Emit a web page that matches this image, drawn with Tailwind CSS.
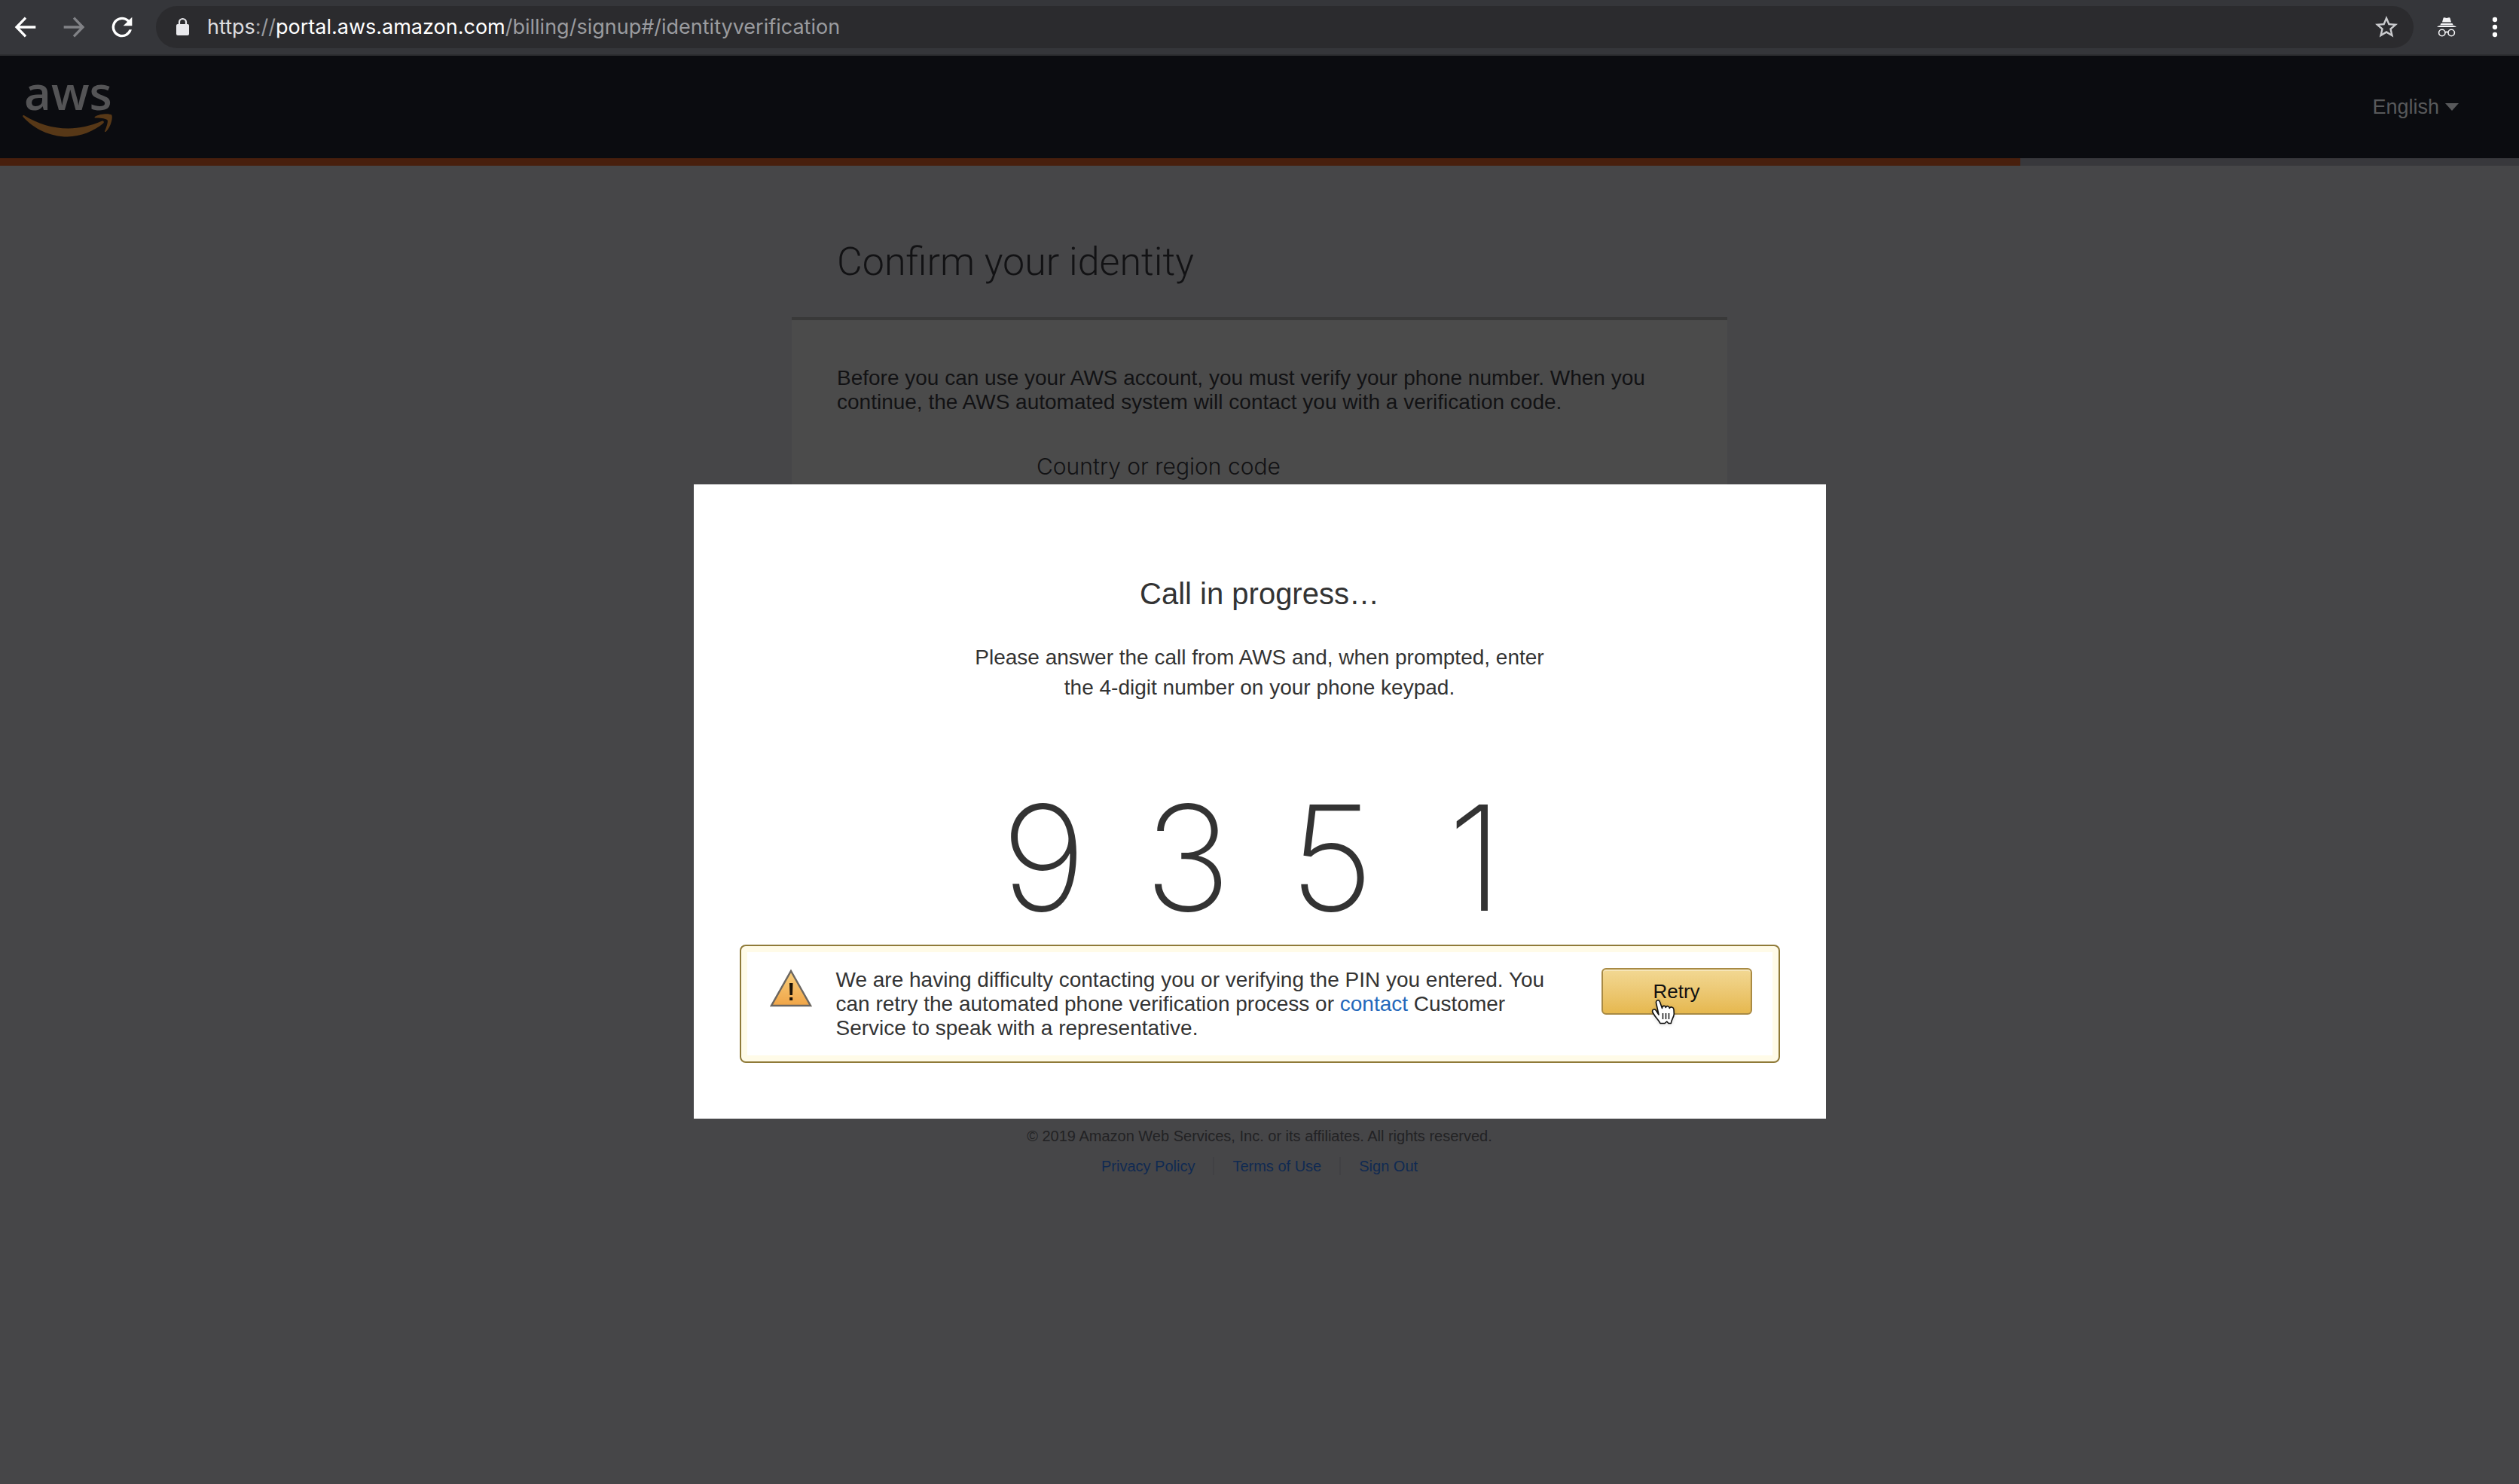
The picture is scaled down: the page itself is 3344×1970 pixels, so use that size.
<!DOCTYPE html>
<html lang="en">
<head>
<meta charset="utf-8">
<title>AWS Console - Signup</title>
<script src="https://cdn.jsdelivr.net/npm/@tailwindcss/browser@4"></script>
</head>
<body class="flex min-h-screen flex-col bg-[#464648] font-['Liberation_Sans',Arial,sans-serif] text-[28px] leading-8 text-[#121214]">

<!-- Browser toolbar -->
<div class="flex h-[74px] items-start border-b-2 border-[#2d2e31] bg-[#35363a] pt-2 pl-0.5 text-white">
  <button aria-label="Back" class="flex h-14 w-16 items-center justify-center">
    <svg class="size-10" viewBox="0 0 24 24" fill="none" stroke="currentColor" stroke-width="2"><path d="M20 12H5M12 4.600L4.800 12l7.200 7.400"/></svg>
  </button>
  <button aria-label="Forward" class="flex h-14 w-16 items-center justify-center text-[#818286]">
    <svg class="size-10" viewBox="0 0 24 24" fill="none" stroke="currentColor" stroke-width="2"><path d="M4 12h15M12 4.600l7.200 7.400-7.200 7.400"/></svg>
  </button>
  <button aria-label="Reload" class="flex h-14 w-16 items-center justify-center">
    <svg class="size-10" viewBox="0 0 24 24" fill="currentColor"><path d="M17.650 6.350A7.960 7.960 0 0 0 12 4a8 8 0 1 0 7.730 10h-2.080A6 6 0 1 1 12 6c1.660 0 3.140.690 4.220 1.780L13 11h7V4z"/></svg>
  </button>
  <div class="mr-3 ml-[13px] flex h-14 flex-1 items-center rounded-full bg-[#2b2b2e] pr-[18px] pl-[23px]">
    <svg class="h-8 w-8 shrink-0" viewBox="0 0 32 32"><rect x="4" y="12" width="17" height="15" rx="2" fill="#e8e8ec"/><path d="M8 13V9.500a4.500 4.500 0 0 1 9 0V13" fill="none" stroke="#e8e8ec" stroke-width="2.200"/></svg>
    <div class="ml-[13px] flex-1 font-['Inter',sans-serif] text-[27px] leading-9 text-[#9a9b9f]"><span class="text-[#dcdde0]">https</span>://<span class="text-white">portal.aws.amazon.com</span>/billing/signup#/identityverification</div>
    <button aria-label="Bookmark this page" class="flex size-9 items-center justify-center text-[#c9cacd]">
      <svg class="size-9" viewBox="0 0 24 24" fill="currentColor"><path d="M22 9.240l-7.190-.620L12 2 9.190 8.630 2 9.240l5.460 4.730L5.820 21 12 17.270 18.180 21l-1.630-7.030zM12 15.400l-3.760 2.270 1-4.280-3.320-2.880 4.380-.380L12 6.100l1.710 4.040 4.380.380-3.320 2.880 1 4.280z"/></svg>
    </button>
  </div>
  <button aria-label="Incognito" class="flex h-14 w-16 items-center justify-center">
    <svg class="h-7 w-7" viewBox="0 0 28 28"><path fill="#f4f4f6" d="M8 7.500L9.500 2q.300-1 1.500-.700l3 .800 3-.800q1.200-.300 1.500.700L20 7.500zM6.500 9h15l1 2h-17zM1 14q1-1.200 4.500-2.200h17q3.500 1 4.500 2.200z"/><g fill="none" stroke="#f4f4f6" stroke-width="1.600"><circle cx="7.800" cy="21.500" r="4.200"/><circle cx="20.200" cy="21.500" r="4.200"/><path d="M12 21q2-1.200 4 0"/></g></svg>
  </button>
  <button aria-label="Menu" class="flex h-14 w-16 items-center justify-center">
    <svg class="size-10" viewBox="0 0 24 24" fill="currentColor"><circle cx="12" cy="6" r="1.900"/><circle cx="12" cy="12" r="1.900"/><circle cx="12" cy="18" r="1.900"/></svg>
  </button>
</div>

<div class="relative flex flex-1 flex-col">
  <!-- Site header and sign-up progress -->
  <header class="flex h-[136px] items-center justify-between bg-[#0b0c10] pr-20 pl-7 text-[#58595b]">
    <a href="#" aria-label="AWS">
      <svg class="h-[104px] w-32 overflow-visible" viewBox="0 -8 128 104">
        <text x="4" y="48" font-family="Open Sans, sans-serif" font-weight="600" font-size="62" fill="#545456">aws</text>
        <path fill="#573817" d="M2.500 57c-1-1.300.400-2.600 2-1.500 17 10.500 37 17 58 17 15 0 30-3.500 44.500-9.700 2.300-1 4 1.400 2 3C97 76 79 83.500 61.500 83.500 38 83.500 17 73 2.500 57z"/>
        <path fill="#573817" d="M98.500 58.500c-1.200.200-1.300-.900-.300-1.700 6-4.300 20-4.500 22-2.200 1.900 2.400-.500 15.800-7.500 22.200-1 .900-2 .400-1.600-.700 1.600-3.900 5-12.700 3.400-14.800-1.600-2.100-11-3.300-16-2.800z"/>
      </svg>
    </a>
    <button class="flex items-center gap-2 text-[27px]">English
      <svg class="h-3 w-[18px]" viewBox="0 0 18 12"><path d="M0 1h18L9 11z" fill="currentColor"/></svg>
    </button>
  </header>
  <div class="h-[10px] bg-[#38383c]"><div class="h-full bg-[#481f0d]" style="width:80.2%"></div></div>

  <main class="mx-auto w-full max-w-[1242px] pt-24">
    <h1 class="mb-[41px] px-[60px] font-['Roboto',sans-serif] text-[52px] leading-[64px] font-light">Confirm your identity</h1>
    <section class="min-h-[1030px] border-t-4 border-[#393939] bg-[#4b4b4b] px-[60px] pt-[61px]">
      <p>Before you can use your AWS account, you must verify your phone number. When you continue, the AWS automated system will contact you with a verification code.</p>
      <p class="mt-[51px] pl-[265px] font-['Inter',sans-serif] text-[30px] leading-9 font-light">Country or region code</p>
    </section>
  </main>

  <footer class="mt-11 flex flex-col items-center text-xl text-[#222224]">
    <p class="leading-[26px]">© 2019 Amazon Web Services, Inc. or its affiliates. All rights reserved.</p>
    <nav class="mt-[15px] flex divide-x-2 divide-[#414144] leading-[24px] text-[#102a52]">
      <a href="#" class="px-6">Privacy Policy</a>
      <a href="#" class="px-6">Terms of Use</a>
      <a href="#" class="px-6">Sign Out</a>
    </nav>
  </footer>

  <!-- Call dialog, over the dimmed page -->
  <div role="dialog" aria-labelledby="call-title" class="absolute inset-x-0 top-[569px] mx-auto flex w-full max-w-[1503px] flex-col items-center bg-white px-[61px] pt-[121px] pb-[74px] text-[#333]">
    <h2 id="call-title" class="text-[40px] leading-[48px]">Call in progress…</h2>
    <p class="mt-[41px] max-w-[780px] text-center leading-10">Please answer the call from AWS and, when prompted, enter the 4-digit number on your phone keypad.</p>
    <div class="mt-[126px] flex font-['Inter',sans-serif] text-[194px] leading-[160px] font-extralight">
      <span class="w-[191px] text-center">9</span>
      <span class="w-[191px] text-center">3</span>
      <span class="w-[191px] text-center">5</span>
      <span class="w-[191px] text-center">1</span>
    </div>
    <div role="alert" class="mt-[35px] flex w-full items-start rounded-lg border-2 border-[#8f7a38] bg-white pt-[29px] pr-[35px] pb-7 pl-[38px] shadow-[inset_0_0_0_8px_#fffbe8]">
      <svg class="h-[52px] w-14 shrink-0" viewBox="0 0 56 52">
        <defs><linearGradient id="warn" x1="0" y1="0" x2="0" y2="1"><stop offset="0" stop-color="#f8ce7c"/><stop offset="1" stop-color="#f0a548"/></linearGradient></defs>
        <path d="M28 4L54 50H2z" fill="url(#warn)" stroke="#6b6660" stroke-width="2.500"/>
        <path d="M26 20h4.500l-.500 16h-3.500zM26.200 39h4v4h-4z" fill="#1a1208"/>
      </svg>
      <p class="ml-8 max-w-[980px] flex-1">We are having difficulty contacting you or verifying the PIN you entered. You can retry the automated phone verification process or <a href="#" class="text-[#2468bb]">contact</a> Customer Service to speak with a representative.</p>
      <div class="relative ml-auto">
        <button class="h-[62px] w-[200px] rounded-md border-2 border-[#a88a44] bg-linear-to-b from-[#f2d893] to-[#e6b84e] text-[26px] text-[#111] shadow-[inset_0_2px_0_#f6e5b8]">Retry</button>
        <!-- Hand pointer -->
        <svg class="pointer-events-none absolute top-[41px] left-[66px] h-9 w-8 drop-shadow-sm" viewBox="0 0 32 36">
          <path d="M10 21L6.600 5.500C5.800 1.500 10.200.400 11.500 4L14.500 12.500C14.500 8.500 18.800 8.500 19.300 11.500 20.500 8.500 24 9.500 24.300 12.500 25.500 10 29.500 10.500 30 14L30.300 20C30.300 24 27 27 26.300 32.500H23L20.700 30 18 32.500H12C10 28 6 25.500 2 18 .500 14 4.500 12.500 6.500 15.500z" fill="#fff" stroke="#111" stroke-width="1.600" stroke-linejoin="round"/>
          <path d="M15.500 19v8M19.500 19v8M23.500 19v8" stroke="#111" stroke-width="1.500"/>
        </svg>
      </div>
    </div>
  </div>
</div>
</body>
</html>
